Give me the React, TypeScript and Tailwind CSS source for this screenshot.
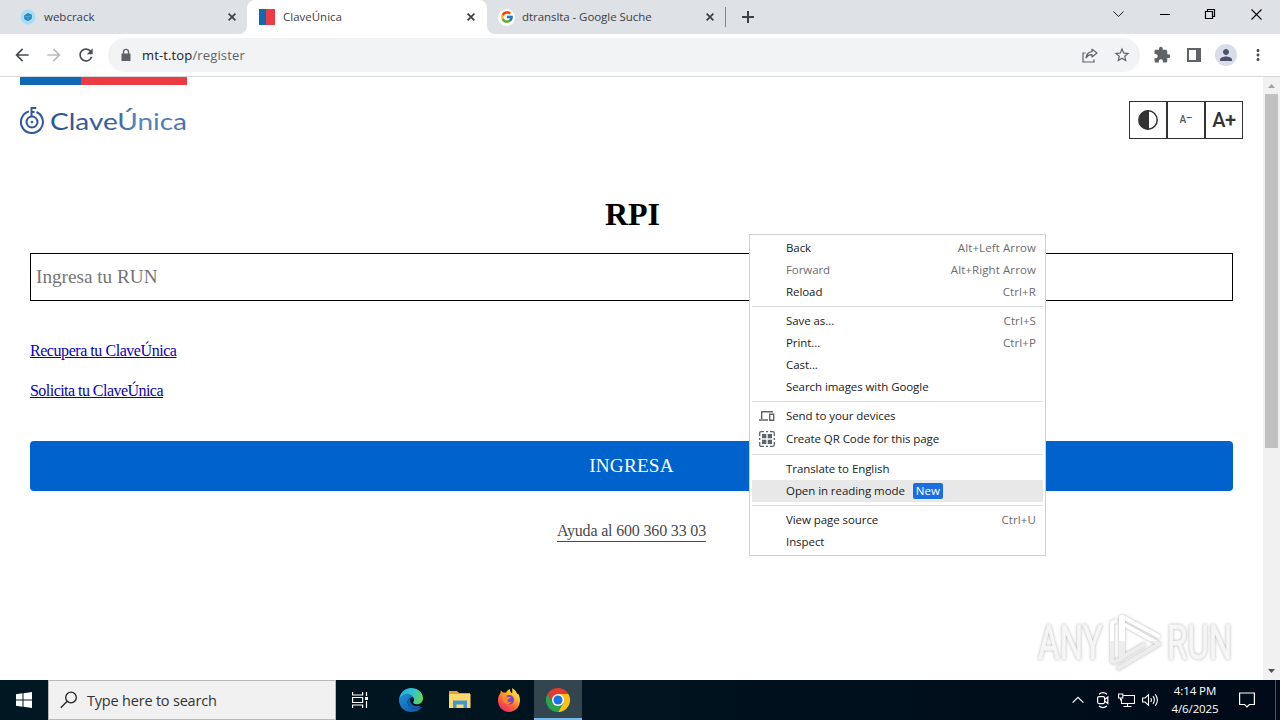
import React from "react";
import { MdArrowBack, MdArrowForward, MdRefresh, MdLock, MdStarBorder, MdExtension, MdPerson, MdMoreVert } from "react-icons/md";
import { FcGoogle } from "react-icons/fc";

function CloseX() {
  return (
    <svg width="8" height="8" viewBox="0 0 8 8" stroke="#3c4043" strokeWidth="1.7" fill="none">
      <path d="M.6.6 7.4 7.4M7.4.6.6 7.4" />
    </svg>
  );
}

function TabStrip() {
  return (
    <div className="flex h-[34px] bg-[#dee1e6] text-[11.5px] text-[#3c4043]">
      <div className="flex h-full w-[247px] items-center pl-[20px]">
        <svg width="16" height="16" viewBox="0 0 16 16">
          <circle cx="8" cy="8" r="7.5" fill="#a9dcf5" />
          <path d="M4 6.600 8 4l4 1.800-.3 4-3.700 2.400-3.600-2z" fill="#2b86bd" />
          <path d="m5 7.200 3 .9 3-1.600M8 8.200v3" stroke="#5fb2dd" strokeWidth=".8" fill="none" />
        </svg>
        <span className="ml-[8px] w-[184px]">webcrack</span>
        <CloseX />
      </div>
      <div className="relative flex h-full w-[240px] items-center rounded-t-[8px] bg-white pl-[12px]">
        <svg className="absolute bottom-0 -left-[8px]" width="8" height="8"><path d="M8 0v8H0a8 8 0 0 0 8-8z" fill="#fff" /></svg>
        <svg className="absolute -right-[8px] bottom-0" width="8" height="8"><path d="M0 0v8h8a8 8 0 0 1-8-8z" fill="#fff" /></svg>
        <div className="flex h-[16px] w-[16px]">
          <div className="w-[7px] bg-[#0f69b4]" />
          <div className="flex-1 bg-[#eb3c46]" />
        </div>
        <span className="ml-[8px] w-[184px]">ClaveÚnica</span>
        <CloseX />
      </div>
      <div className="flex h-full w-[239px] items-center pl-[11px]">
        <div className="flex h-[17px] w-[17px] items-center justify-center rounded-full bg-white">
          <FcGoogle size={14} />
        </div>
        <span className="ml-[7px] w-[184px] tracking-[-0.06px]">dtranslta - Google Suche</span>
        <CloseX />
        <div className="ml-[11px] h-[20px] w-px bg-[#80868b]" />
      </div>
      <svg className="mt-[11px] ml-[16px]" width="12" height="12" stroke="#3c4043" strokeWidth="2"><path d="M6 0v12M0 6h12" /></svg>
      <div className="ml-auto flex items-start pt-[8px] pr-[18px]">
        <svg width="150" height="13" viewBox="0 0 150 13" fill="none" stroke="#202124" strokeWidth="1">
          <path d="m1.500 3.500 5 5 5-5" />
          <path d="M48 6.500h10" stroke="#000" />
          <path d="M93.500 3.500h7v7h-7zM95.500 3.500v-2h7v7h-2" stroke="#000" strokeWidth="1.2" />
          <path d="m139.500 1.500 10 10M149.500 1.500l-10 10" stroke="#000" strokeWidth="1.1" />
        </svg>
      </div>
    </div>
  );
}

function Toolbar() {
  return (
    <div className="flex h-[43px] items-center border-b border-[#d5d7da] bg-white text-[#5f6368]">
      <MdArrowBack className="ml-[12px] text-[#4a4d51]" size={20} />
      <MdArrowForward className="ml-[12px] text-[#babcbe]" size={20} />
      <MdRefresh className="ml-[12px] text-[#4a4d51]" size={20} />
      <div className="ml-[12px] flex h-[34px] w-[1032px] items-center rounded-full bg-[#f1f3f4] pl-[11px]">
        <svg width="14" height="14" viewBox="0 0 14 14"><path d="M2.500 5.500h9v7.500h-9z" fill="#5f6368" /><path d="M4.500 6V3.800a2.500 2.500 0 0 1 5 0V6" fill="none" stroke="#5f6368" strokeWidth="1.300" /></svg>
        <span className="ml-[9px] pt-[1px] text-[13px] tracking-[0.14px]"><span className="text-[#202124]">mt-t.top</span>/register</span>
        <svg className="ml-auto" width="16" height="15" viewBox="0 0 16 15" fill="none" stroke="#5f6368" strokeWidth="1.2">
          <path d="M3.500 5H1v9h11v-2.500" />
          <path d="M10 1.200 15 5l-5 4V6.700C7.500 6.600 5.500 7.500 4 9.800 4.400 6.300 6.500 4 10 3.600z" strokeLinejoin="round" />
        </svg>
        <MdStarBorder className="mr-[9px] ml-[15px]" size={18} />
      </div>
      <MdExtension className="ml-[13px]" size={18} />
      <svg className="ml-[16px]" width="14" height="14" viewBox="0 0 14 14"><path d="M0 0h14v14H0zM2 2v10h7V2z" fill="#5f6368" fillRule="evenodd" /></svg>
      <div className="ml-[14px] flex h-[22px] w-[22px] items-center justify-center rounded-full bg-[#dadce8] text-[#4b5169]"><MdPerson size={18} /></div>
      <MdMoreVert className="ml-[12px] text-[#4a4d51]" size={18} />
    </div>
  );
}

function Logo() {
  return (
    <svg className="mt-[19px] ml-[20px]" width="168" height="34" viewBox="0 0 168 34">
      <defs>
        <linearGradient id="word" gradientUnits="userSpaceOnUse" x1="0" y1="0" x2="168" y2="0">
          <stop offset="0" stopColor="#2d4f8f" />
          <stop offset=".55" stopColor="#3a5f9f" />
          <stop offset=".72" stopColor="#5b87be" />
          <stop offset="1" stopColor="#4670ab" />
        </linearGradient>
      </defs>
      <g fill="none" stroke="#31579a" strokeWidth="2">
        <path d="M9 7.400a11 11 0 1 0 7.500.6" />
        <circle cx="12" cy="18" r="5.500" />
        <path d="M11.500 12.500V4h4.800M11.500 8h3" />
      </g>
      <circle cx="12" cy="18" r="1.300" fill="#31579a" />
      <text x="30" y="26" fontFamily="Lato" fontSize="24" fill="url(#word)" textLength="137" lengthAdjust="spacingAndGlyphs">ClaveÚnica</text>
    </svg>
  );
}

function Watermark() {
  return (
    <svg className="absolute top-[605px] left-[1030px] drop-shadow-[0_0_1.5px_rgba(0,0,0,0.3)]" width="220" height="72" viewBox="0 0 220 72">
      <defs>
        <linearGradient id="wm" gradientUnits="userSpaceOnUse" x1="0" y1="0" x2="0" y2="72">
          <stop offset=".5" stopColor="#fff" />
          <stop offset=".5" stopColor="#ededed" />
        </linearGradient>
      </defs>
      <g fontFamily="Roboto" fontSize="48" fill="url(#wm)" stroke="url(#wm)" strokeWidth=".8">
        <g transform="translate(8 54) scale(.69 1)"><text fill="#f6f6f6" stroke="#f6f6f6">ANY</text></g>
        <g transform="translate(137 54) scale(.69 1)"><text fill="#f6f6f6" stroke="#f6f6f6">RUN</text></g>
      </g>
      <g fill="none" stroke="url(#wm)" strokeWidth="4" strokeLinejoin="round">
        <path d="M93 46V12l37 20" />
        <path d="M87 64l42-25L93 19M93 46v6l22-13" />
        <path d="M82 58V18l5-3M93 12l-2 0v42l-9 4" />
      </g>
    </svg>
  );
}

function Page() {
  return (
    <div className="flex h-[603px] bg-white font-['Liberation_Serif',serif]">
      <div className="w-[1263px]">
        <div className="flex justify-between">
          <div>
            <div className="ml-[20px] flex h-[8px] w-[167px]">
              <div className="w-[61px] bg-[#0f69b4]" />
              <div className="flex-1 bg-[#eb3c46]" />
            </div>
            <Logo />
          </div>
          <div className="mt-[24px] mr-[20px] flex h-[38px] w-[114px] border border-[#333] font-['Roboto',sans-serif] font-medium text-[#333]">
            <div className="flex w-[36px] items-center justify-center">
              <svg width="20" height="20" viewBox="0 0 20 20"><circle cx="10" cy="10" r="9.200" fill="none" stroke="#333" strokeWidth="1.500" /><path d="M11 0a10 10 0 1 0 0 20z" fill="#333" /></svg>
            </div>
            <div className="flex w-[40px] items-center justify-center border-x-2 border-[#333] pb-[2px] text-[10px] text-[#555]">A<span className="pb-[1px]">–</span></div>
            <div className="flex flex-1 items-center justify-center text-[20px] tracking-[-0.5px]">A+</div>
          </div>
        </div>
        <h1 className="mt-[57px] pl-[2px] text-center text-[32px] leading-[37px] font-bold text-black">RPI</h1>
        <div className="mt-[20px] ml-[30px] flex h-[48px] w-[1203px] items-center border border-black pl-[5px] text-[19.2px] text-[#757575]">Ingresa tu RUN</div>
        <div className="mt-[40px] ml-[30px] flex flex-col items-start gap-[20px] text-[16px] leading-[20px] text-[#0a00b4]">
          <a className="tracking-[-0.45px] underline">Recupera tu ClaveÚnica</a>
          <a className="tracking-[-0.54px] underline">Solicita tu ClaveÚnica</a>
        </div>
        <div className="mt-[40px] ml-[30px] flex h-[50px] w-[1203px] items-center justify-center rounded-[4px] bg-[#0062cc] text-[19.2px] tracking-[0.2px] text-white">INGRESA</div>
        <div className="mt-[30px] flex justify-center">
          <span className="border-b border-[#4a4a4a] text-[16px] leading-[20px] tracking-[-0.17px] text-[#4a4a4a]">Ayuda al 600 360 33 03</span>
        </div>
      </div>
      <div className="flex w-[17px] flex-col items-center bg-[#f1f1f1]">
        <svg width="17" height="17"><path d="m5 11 3.500-4 3.500 4z" fill="#a3a3a3" /></svg>
        <div className="h-[354px] w-[13px] bg-[#c1c1c1]" />
        <svg className="mt-auto" width="17" height="17"><path d="m5 6 3.500 4L12 6z" fill="#505050" /></svg>
      </div>
    </div>
  );
}

function Item({ label, keys, dim, icon, tall, active, badge }: { label: string; keys?: string; dim?: boolean; icon?: React.ReactNode; tall?: boolean; active?: boolean; badge?: boolean }) {
  return (
    <div className={`mx-[2px] flex items-center pr-[7px] ${tall ? "h-[24px]" : "h-[22px]"} ${active ? "bg-[#e8e8e8]" : ""}`}>
      <div className="flex w-[34px] items-center pl-[7px]">{icon}</div>
      <span className={dim ? "tracking-[-0.08px] text-[#6d6d6d]" : "tracking-[-0.07px] text-[#202124]"}>{label}</span>
      {badge && <span className="ml-[8px] flex h-[16px] w-[30px] items-center justify-center rounded-[2px] bg-[#1a6fe0] text-white">New</span>}
      <span className="ml-auto tracking-[0.1px] text-[#6d6d6d]">{keys}</span>
    </div>
  );
}

function Sep() {
  return <div className="mx-[2px] my-[3px] h-px bg-[#dcdcdc]" />;
}

function ContextMenu() {
  const devices = (
    <svg width="16" height="16" viewBox="0 0 16 16" fill="none" stroke="#5f6368" strokeWidth="1.400">
      <path d="M2.700 11V3.700H14M0 12h9" />
      <path d="M10.700 6.200h4v6.100h-4z" />
    </svg>
  );
  const qr = (
    <svg width="16" height="16" viewBox="0 0 16 16" fill="none" stroke="#5f6368" strokeWidth="1.300">
      <path d="M.7 5V2.200Q.7.700 2.200.7H5M11 .7h2.800q1.500 0 1.500 1.500V5M15.300 11v2.800q0 1.500-1.500 1.500H11M5 15.300H2.200q-1.500 0-1.500-1.500V11M7 .7h2M7 15.300h2M.7 7v2M15.300 7v2" />
      <path d="M3 3h4.300v4.300H3zM8.700 3H13v4.300H8.700zM3 8.700h4.300V13H3zM8.700 8.700H13V13H8.700z" fill="#5f6368" stroke="none" />
    </svg>
  );
  return (
    <div className="absolute top-[234px] left-[749px] h-[322px] w-[297px] border border-[#d0d0d0] bg-white py-[2px] text-[11.5px]">
      <Item label="Back" keys="Alt+Left Arrow" />
      <Item label="Forward" keys="Alt+Right Arrow" dim />
      <Item label="Reload" keys="Ctrl+R" />
      <Sep />
      <Item label="Save as..." keys="Ctrl+S" />
      <Item label="Print..." keys="Ctrl+P" />
      <Item label="Cast..." />
      <Item label="Search images with Google" />
      <Sep />
      <Item label="Send to your devices" icon={devices} />
      <Item label="Create QR Code for this page" icon={qr} tall />
      <Sep />
      <Item label="Translate to English" />
      <Item label="Open in reading mode" active badge />
      <Sep />
      <Item label="View page source" keys="Ctrl+U" />
      <Item label="Inspect" />
    </div>
  );
}

function EdgeIcon() {
  return (
    <svg width="24" height="24" viewBox="0 0 24 24">
      <defs>
        <linearGradient id="e1" x1="0" y1=".3" x2="1" y2=".5"><stop offset="0" stopColor="#2aa8e8" /><stop offset=".55" stopColor="#2fc3d0" /><stop offset="1" stopColor="#68d84c" /></linearGradient>
        <linearGradient id="e2" x1="0" y1="0" x2="1" y2="1"><stop offset="0" stopColor="#1c8fdc" /><stop offset="1" stopColor="#0f559f" /></linearGradient>
      </defs>
      <path d="M0 12C.5 5 5.500 0 12 0c7 0 12 4.800 12 10.300 0 3.900-3 6-6 6-2.500 0-3.800-.9-3.800-1.700 0-.6.900-1 .9-2.800C15.100 9 12 6.500 8.500 6.500 4.500 6.500 1.500 8.500 0 12z" fill="url(#e1)" />
      <path d="M0 12c1-4 4.500-5.600 8-5.600 2.800 0 5.200 1.100 6.400 2.800C11 8.700 8.600 11 8.600 14c0 4 4 7 8.400 6.700 2-.2 3.700-.9 5-1.600.5-.3.800.1.500.6C20.500 22.500 16.500 24 12 24 5 24 0 18.500 0 12z" fill="url(#e2)" />
      <path d="M8.600 14c0-2.300 1.300-4 3.300-4.700-.8 1-1 2.200-.8 3.500.5 3.500 4 5.700 8 5.300 1.200-.1 2-.4 2.700-.7-.9 2-2.800 3.200-5.300 3.300-4.300.1-7.900-2.700-7.900-6.700z" fill="#1260ad" />
    </svg>
  );
}

function FirefoxIcon() {
  return (
    <svg width="24" height="24" viewBox="0 0 24 24">
      <defs>
        <linearGradient id="f1" x1=".85" y1="0" x2=".2" y2="1"><stop offset="0" stopColor="#fff04c" /><stop offset=".35" stopColor="#ffb42c" /><stop offset=".6" stopColor="#ff6a32" /><stop offset="1" stopColor="#e61e73" /></linearGradient>
      </defs>
      <path d="M1 12.500C1 9 2.200 6.800 3.500 5.300L3.800 2.500 6 4.500c1-.1 2-.1 3 .2C10 2.500 11.500 1.500 13 1c-.3 1.800.5 3 2 4.200C15.600 3.500 15.300 1.500 15 0c3.200 1.700 4.600 4 5.200 6.200L21 5.500C22.500 8 23 10 23 12.500 23 19 18 24 12 24S1 19 1 12.500z" fill="url(#f1)" />
      <path d="M7.500 11.500c.3-3 2.200-4.500 4.500-4.500 3.200 0 5 2.200 5 4.900 0 2.600-2 4.600-4.500 4.600-2.900 0-5.200-2-5-5z" fill="#7a45d0" />
      <path d="M5.500 8.500c2.300-1 4.200-.5 5.500.5h2.800c-.2 1.500-2.800 1.700-3.300 3-.5 1.700 2 2.800 4 1.600-1 3-5.300 3.500-7.300.9-1.200-1.700-1.900-3.700-1.700-6z" fill="#ff8a2b" />
    </svg>
  );
}

function ChromeIcon() {
  return (
    <svg width="24" height="24" viewBox="0 0 24 24">
      <path d="M22.400 6A12 12 0 0 1 12 24l5.200-9L12 6z" fill="#fbc116" />
      <path d="M1.600 6A12 12 0 0 1 22.400 6H12L6.800 15z" fill="#e33b2e" />
      <path d="M1.600 6A12 12 0 0 0 12 24l5.200-9H6.800z" fill="#2ba24c" />
      <circle cx="12" cy="12" r="6" fill="#fff" />
      <circle cx="12" cy="12" r="4.600" fill="#1a73e8" />
    </svg>
  );
}

function Taskbar() {
  return (
    <div className="flex h-[40px] bg-gradient-to-r from-[#001822] via-[#00131f] to-[#000a18] text-white">
      <div className="flex w-[48px] items-center justify-center">
        <svg width="16" height="16" viewBox="0 0 16 16" fill="#fff"><path d="M0 2.200 6.500 1.300V7.500H0zM7.500 1.200 16 0V7.500H7.500zM0 8.500H6.500V14.700L0 13.800zM7.500 8.500H16V16L7.500 14.800z" /></svg>
      </div>
      <div className="flex w-[288px] items-center border border-[#b8b8b8] bg-[#f1f1f1] pl-[11px]">
        <svg width="18" height="18" viewBox="0 0 18 18" fill="none" stroke="#222" strokeWidth="1.300"><circle cx="11" cy="6.500" r="5.300" /><path d="M7.200 10.300.8 16.700" /></svg>
        <span className="ml-[9px] pt-[2px] text-[14.500px] tracking-[-0.2px] text-[#333]">Type here to search</span>
      </div>
      <div className="flex w-[48px] items-center justify-center">
        <svg width="17" height="16" viewBox="0 0 17 16" fill="none" stroke="#fff" strokeWidth="1.200"><path d="M.6 0v3h10V0M.6 5.500h10v5H.6zM.6 16v-3h10v3M14.500 0v4M14.500 9v7" /><path d="M13 5h3v3h-3z" fill="#fff" stroke="none" /></svg>
      </div>
      <div className="flex w-[54px] items-center justify-center"><EdgeIcon /></div>
      <div className="flex w-[44px] items-center justify-center">
        <svg width="22" height="20" viewBox="0 0 22 20"><path d="M0 1h8l2 2h11v15H0z" fill="#e8a52c" /><path d="M0 4h21.500v14H0z" fill="#ffd86b" /><path d="M4 10.500h14V18h-3.500v-3.500h-7V18H4z" fill="#3f98d0" /></svg>
      </div>
      <div className="flex w-[53px] items-center justify-center"><FirefoxIcon /></div>
      <div className="-ml-px flex w-[48px] items-center justify-center border-b-2 border-[#76b9ed] bg-[#33454f] pt-[2px]"><ChromeIcon /></div>
      <div className="ml-auto flex items-center">
        <svg width="12" height="8" fill="none" stroke="#fff" strokeWidth="1.200"><path d="m.6 6.700 5.400-5.400 5.400 5.400" /></svg>
        <svg className="ml-[13px]" width="12" height="18" viewBox="0 0 12 18" fill="none" stroke="#fff" strokeWidth="1.200"><rect x=".6" y="5.600" width="7" height="7" rx="1.500" /><path d="M7.600 8.500 10.800 6v6.500L7.600 10M2 3.300Q6 0 10 3.300M2 15Q6 18.300 10 15" /></svg>
        <svg className="ml-[9px]" width="17" height="15" viewBox="0 0 17 15" fill="none" stroke="#fff" strokeWidth="1.100"><path d="M5.500 2.500h11v8h-13V6M9.500 10.500v3M5.500 13.500h8M.6 1h4.200v4H.6zM2.500 5v2.500" /></svg>
        <svg className="ml-[7px]" width="17" height="14" viewBox="0 0 17 14" fill="none" stroke="#fff" strokeWidth="1.100"><path d="M.6 5v4h2.500l3.400 3.300V1.700L3.100 5zM8.700 5q1.400 2 0 4M11 3.200q2.800 3.800 0 7.600M13.300 1.300q4.200 5.700 0 11.400" /></svg>
        <div className="ml-[11px] flex w-[50px] flex-col items-center text-[11.500px] leading-[18px] tracking-[-0.1px] whitespace-nowrap"><span>4:14 PM</span><span>4/6/2025</span></div>
        <svg className="mr-[20px] ml-[19px]" width="16" height="16" viewBox="0 0 16 16" fill="none" stroke="#fff" strokeWidth="1.200"><path d="M.6 1h14.800v11.500h-5L8 15l-2.400-2.500h-5z" /></svg>
        <div className="mr-[4px] h-[40px] w-px bg-[#4a525c]" />
      </div>
    </div>
  );
}

export default function App() {
  return (
    <div className="relative h-[720px] w-[1280px] overflow-hidden bg-white font-['Open_Sans','Noto_Sans',sans-serif]">
      <TabStrip />
      <Toolbar />
      <Page />
      <Taskbar />
      <Watermark />
      <ContextMenu />
    </div>
  );
}
